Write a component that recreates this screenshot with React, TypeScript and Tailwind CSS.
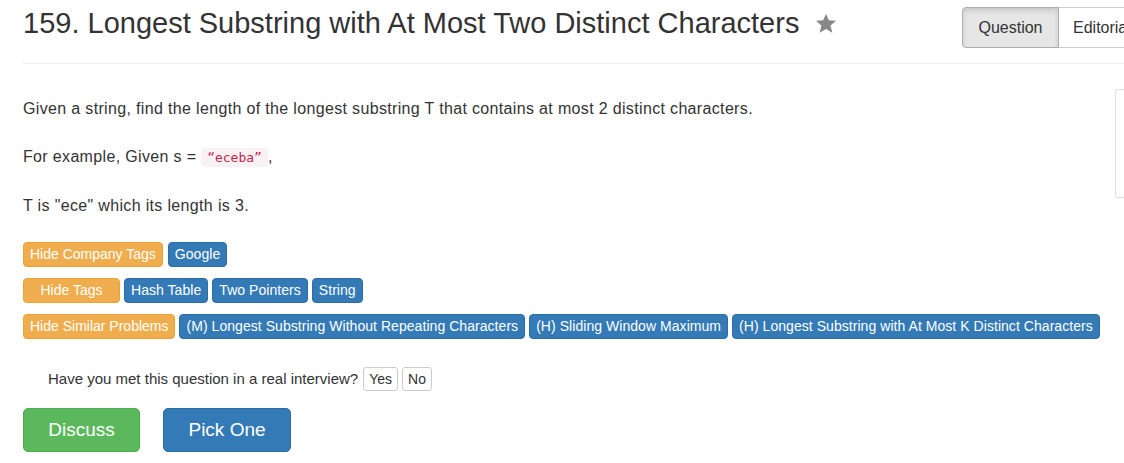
import React from "react";

const companyTags = ["Google"];
const topicTags = ["Hash Table", "Two Pointers", "String"];
const similar = [
  "(M) Longest Substring Without Repeating Characters",
  "(H) Sliding Window Maximum",
  "(H) Longest Substring with At Most K Distinct Characters",
];

function Tag({ label }: { label: string }) {
  return (
    <span className="inline-flex h-[25px] shrink-0 items-center whitespace-nowrap rounded-[4px] border border-[#2e6da4] bg-[#337ab7] px-[6px] text-[14px] tracking-[0.05px] text-white">
      {label}
    </span>
  );
}

function Toggle({ label, className = "" }: { label: string; className?: string }) {
  return (
    <span
      className={`inline-flex h-[25px] shrink-0 items-center justify-center whitespace-nowrap rounded-[4px] border border-[#eea236] bg-[#f0ad4e] px-[6px] text-[14px] text-white ${className}`}
    >
      {label}
    </span>
  );
}

function Star() {
  return (
    <svg width="22" height="21" viewBox="0 0 24 23" className="shrink-0">
      <path
        d="M12 0.8 L15.1 8 L23 8.6 L17 13.8 L18.9 21.6 L12 17.4 L5.1 21.6 L7 13.8 L1 8.6 L8.9 8 Z"
        fill="#888888"
      />
    </svg>
  );
}

export default function App() {
  return (
    <div className="w-[1124px] h-[463px] overflow-hidden bg-white pl-[23px] font-['Liberation_Sans',Arial,sans-serif] text-[#333]">
      <div className="flex h-[63px] items-start">
        <div className="flex flex-1 items-center gap-[16px] pt-[6px]">
          <h3 className="text-[29px] leading-[34px] whitespace-nowrap">
            159. Longest Substring with At Most Two Distinct Characters
          </h3>
          <Star />
        </div>
        <div className="mt-[7px] flex w-[162px] shrink-0">
          <span className="flex h-[41px] w-[97px] shrink-0 items-center justify-center rounded-l-[4px] border border-[#adadad] bg-[#e6e6e6] text-[16px] shadow-[inset_0_3px_5px_rgba(0,0,0,0.125)]">
            Question
          </span>
          <span className="flex h-[41px] shrink-0 items-center whitespace-nowrap border border-l-0 border-[#ccc] bg-white px-[14px] text-[16px]">
            Editorial
          </span>
        </div>
      </div>
      <div className="border-t border-[#eee]" />

      <div className="flex">
        <div className="w-[1092px] shrink-0">
          <div className="pt-[34px] text-[16px] leading-[22px] tracking-[0.34px]">
            <p className="mb-[26px]">
              Given a string, find the length of the longest substring T that contains at most 2 distinct characters.
            </p>
            <p className="mb-[26px]">
              For example, Given s ={" "}
              <code className="rounded-[4px] bg-[#f9f2f4] px-[6px] py-[2px] font-['DejaVu_Sans_Mono',monospace] text-[13px] tracking-normal text-[#c7254e]">
                “eceba”
              </code>
              ,
            </p>
            <p>T is "ece" which its length is 3.</p>
          </div>

          <div className="mt-[25px] flex flex-col gap-[11px]">
            <div className="flex gap-[5px]">
              <Toggle label="Hide Company Tags" />
              {companyTags.map((t) => (
                <Tag key={t} label={t} />
              ))}
            </div>
            <div className="flex gap-[4px]">
              <Toggle label="Hide Tags" className="w-[97px]" />
              {topicTags.map((t) => (
                <Tag key={t} label={t} />
              ))}
            </div>
            <div className="flex gap-[4px]">
              <Toggle label="Hide Similar Problems" />
              {similar.map((t) => (
                <Tag key={t} label={t} />
              ))}
            </div>
          </div>

          <div className="mt-[28px] flex items-center gap-[4px] pl-[25px] text-[15px]">
            <span className="mr-[1px]">Have you met this question in a real interview?</span>
            <span className="flex h-[24px] items-center rounded-[3px] border border-[#ccc] px-[5px] text-[14px]">Yes</span>
            <span className="flex h-[24px] items-center rounded-[3px] border border-[#ccc] px-[5px] text-[14px]">No</span>
          </div>

          <div className="mt-[17px] flex gap-[23px]">
            <span className="flex h-[44px] w-[117px] items-center justify-center rounded-[5px] border border-[#4cae4c] bg-[#5cb85c] text-[19px] text-white">
              Discuss
            </span>
            <span className="flex h-[44px] w-[128px] items-center justify-center rounded-[5px] border border-[#2e6da4] bg-[#337ab7] text-[19px] text-white">
              Pick One
            </span>
          </div>
        </div>
        <div className="mt-[25px] h-[109px] w-[200px] shrink-0 rounded-l-[3px] border border-[#ddd]" />
      </div>
    </div>
  );
}
